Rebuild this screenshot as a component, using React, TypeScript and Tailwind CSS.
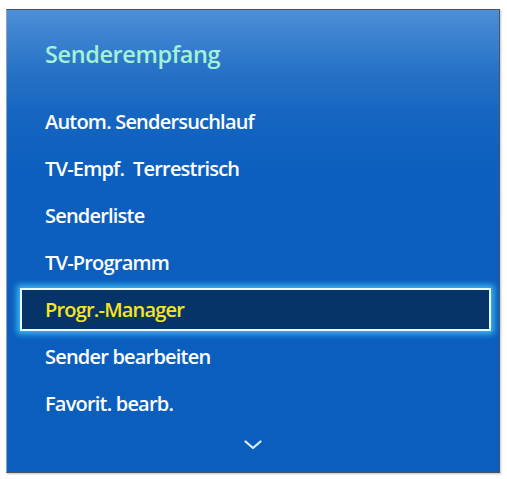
import React from 'react';

const items = [
  'Autom. Sendersuchlauf',
  'TV-Empf.  Terrestrisch',
  'Senderliste',
  'TV-Programm',
  'Progr.-Manager',
  'Sender bearbeiten',
  'Favorit. bearb.',
];

const selected = 'Progr.-Manager';

export default function App() {
  return (
    <div className="w-[507px] h-[479px] bg-white pt-[9px] pl-[6px]">
      <div
        className="flex flex-col w-[494px] h-[464px] border border-[#4a5563] border-l-[#8ea2b8] shadow-[1px_1px_2px_rgba(0,0,0,0.25)] bg-[linear-gradient(to_bottom,#4d8fd7_0%,#2a74c8_12%,#1666c1_22%,#0c5fbe_35%,#0a5ebd_100%)]"
        style={{ fontFamily: '"Open Sans", "Noto Sans", sans-serif' }}
      >
        <div className="pl-[38px] pt-[28px] h-[88px]">
          <h2 className="text-[23.5px] leading-[32px] font-semibold text-[#a2f2d6] tracking-[-0.4px]">
            Senderempfang
          </h2>
        </div>
        <ul className="flex flex-col">
          {items.map((item) => (
            <li key={item} className="h-[47px] flex items-center pl-[13px] pr-[8px]">
              <div
                className={`h-[43px] w-full flex items-center ${
                  item === selected
                    ? 'pl-[23px] border-2 border-[#e8fbff] bg-[#073468] shadow-[0_0_6px_3px_rgba(70,200,255,0.85)] text-[#f7e61c]'
                    : 'pl-[25px] text-white'
                }`}
              >
                <span className="text-[20px] font-semibold tracking-[-0.8px] whitespace-pre">
                  {item}
                </span>
              </div>
            </li>
          ))}
        </ul>
        <div className="flex justify-center pt-[13px]">
          <svg width="18" height="10" viewBox="0 0 18 10" fill="none">
            <path
              d="M1.5 1.5 L9 8 L16.5 1.5"
              stroke="#dcefff"
              strokeWidth="2.2"
              strokeLinecap="round"
              strokeLinejoin="round"
            />
          </svg>
        </div>
      </div>
    </div>
  );
}
